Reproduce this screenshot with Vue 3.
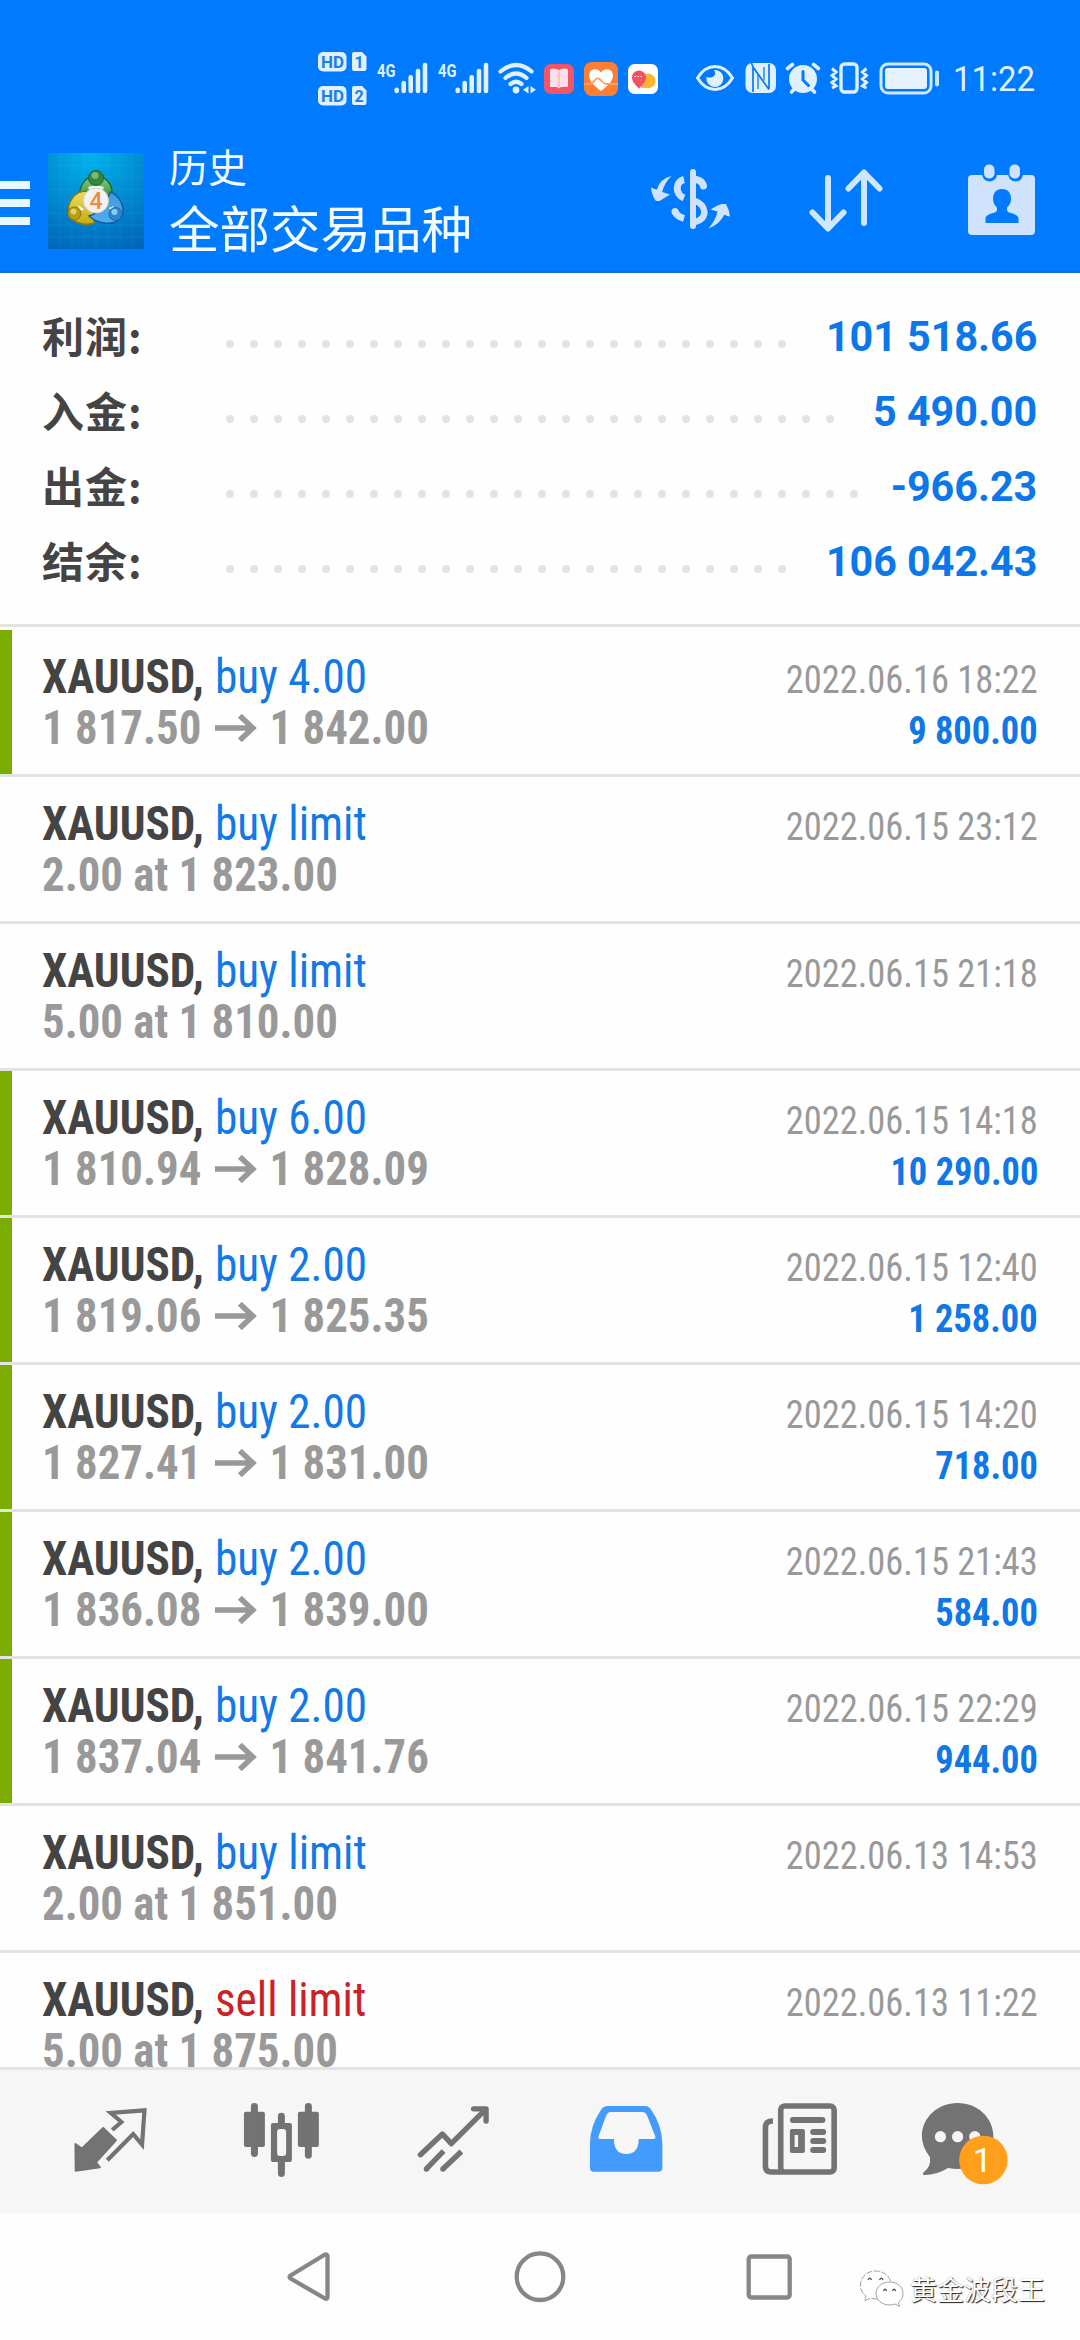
<script setup>
const summary = [
  { label: '利润:', value: '101 518.66', dots: 24 },
  { label: '入金:', value: '5 490.00', dots: 26 },
  { label: '出金:', value: '-966.23', dots: 27 },
  { label: '结余:', value: '106 042.43', dots: 24 },
]

const deals = [
  { kind: 'buy 4.00', from: '1 817.50', to: '1 842.00', time: '2022.06.16 18:22', profit: '9 800.00' },
  { kind: 'buy limit', note: '2.00 at 1 823.00', time: '2022.06.15 23:12' },
  { kind: 'buy limit', note: '5.00 at 1 810.00', time: '2022.06.15 21:18' },
  { kind: 'buy 6.00', from: '1 810.94', to: '1 828.09', time: '2022.06.15 14:18', profit: '10 290.00' },
  { kind: 'buy 2.00', from: '1 819.06', to: '1 825.35', time: '2022.06.15 12:40', profit: '1 258.00' },
  { kind: 'buy 2.00', from: '1 827.41', to: '1 831.00', time: '2022.06.15 14:20', profit: '718.00' },
  { kind: 'buy 2.00', from: '1 836.08', to: '1 839.00', time: '2022.06.15 21:43', profit: '584.00' },
  { kind: 'buy 2.00', from: '1 837.04', to: '1 841.76', time: '2022.06.15 22:29', profit: '944.00' },
  { kind: 'buy limit', note: '2.00 at 1 851.00', time: '2022.06.13 14:53' },
  { kind: 'sell limit', note: '5.00 at 1 875.00', time: '2022.06.13 11:22', sell: true },
]
</script>

<template>
  <div class="screen">
    <header class="top">
      <div class="status">
        <svg class="status-icons" viewBox="310 48 640 64" width="640" height="64">
          <g fill="#dff1ff">
            <rect x="318" y="52" width="28.5" height="19.5" rx="5" />
            <path d="M354 52h8l4.500 4.500v12.500q0 2-2 2h-10.500q-2 0-2-2v-15q0-2 2-2z" />
            <rect x="318" y="86" width="28.500" height="19.500" rx="5" />
            <path d="M354 86h8l4.500 4.500v12.500q0 2-2 2h-10.500q-2 0-2-2v-15q0-2 2-2z" />
          </g>
          <g class="badge-text" fill="#1680f0">
            <text x="321" y="67.500" font-size="17" textLength="23" lengthAdjust="spacingAndGlyphs">HD</text>
            <text x="321" y="101.500" font-size="17" textLength="23" lengthAdjust="spacingAndGlyphs">HD</text>
            <text x="354.500" y="67.500" font-size="16">1</text>
            <text x="354.500" y="101.500" font-size="16">2</text>
          </g>
          <g v-for="dx in [0, 61]" :key="dx" :transform="`translate(${dx} 0)`">
            <text class="badge-text" x="377" y="76.500" font-size="19" fill="#dff1ff" textLength="18.500" lengthAdjust="spacingAndGlyphs">4G</text>
            <path d="M396.700 89.800v1.200M403.700 83v8M410.700 77.300v13.700M418 71v20M425 65v26" stroke="#dff1ff" stroke-width="4.600" stroke-linecap="round" />
          </g>
          <g fill="none" stroke="#dff1ff" stroke-width="4.200" stroke-linecap="round">
            <path d="M500.500 71.500q15.500-13 31 0" />
            <path d="M505.500 78q10.500-9 21 0" />
            <path d="M510.500 84q5.500-4.500 11 0" />
          </g>
          <circle cx="516" cy="90" r="3.400" fill="#dff1ff" />
          <path d="M528.500 86v7.500l-5.500-3.700zM530.500 86v7.500l5.500-3.700z" fill="#dff1ff" />

          <rect x="544" y="64" width="30" height="30" rx="6.500" fill="#f15567" />
          <path d="M550 69q5-1.500 9 1q4-2.500 9-1v18h-7l-2 1.500-2-1.500h-7z" fill="#ffe0e6" />
          <path d="M559 70v18" stroke="#f6a3b0" stroke-width="1" />
          <rect x="584" y="62" width="34" height="34" rx="7.500" fill="#ff7e35" />
          <path d="M601 91c-5-4-12-9-12-15.500c0-7 8.500-8.500 12-3c3.500-5.500 12-4 12 3c0 6.500-7 11.500-12 15.500z" fill="#fff" />
          <path d="M584 84h5q3 0 6-4q2.500-3 5-.5q4 4.500 7 4.500h11" fill="none" stroke="#ff9d5c" stroke-width="1.800" />
          <rect x="628" y="64" width="30" height="30" rx="6.500" fill="#fff" />
          <path d="M641 88v-8a7.300 7.300 0 1 1 5.500 8z" fill="#ffb52e" />
          <path d="M639 88.500c-4-4-7-7-7-11a7 7 0 0 1 14 0c0 4-3 7-7 11z" fill="#f4505f" />
          <path d="M634.500 76.500h8" stroke="#fff" stroke-width="1.200" stroke-dasharray="1.500 1.500" />

          <path d="M697.500 78q7-11.500 17.500-11.500t17.500 11.500q-7 11.500-17.500 11.500t-17.500-11.500z" fill="none" stroke="#dff1ff" stroke-width="3" />
          <path d="M714 70a8.500 8.500 0 1 1-7.500 7q5 1.500 7.500-1t0-6z" fill="#dff1ff" />

          <rect x="745.500" y="63" width="30.500" height="30" rx="7" fill="#dff1ff" />
          <path d="M753 92v-25l16 22.500M769 64v25M753 67l-1.500-4" fill="none" stroke="#0879fa" stroke-width="1.700" />
          <path d="M758 89v-14M764 67v13.500" stroke="#0879fa" stroke-width="1.300" />

          <circle cx="803" cy="79" r="14" fill="#dff1ff" />
          <path d="M787.500 68.500l5-4M818.500 68.500l-5-4M791.500 92l3-3M814.500 92l-3-3" stroke="#dff1ff" stroke-width="3.600" stroke-linecap="round" />
          <path d="M803 71.500v8.500l5.500 5.500" fill="none" stroke="#0879fa" stroke-width="3" stroke-linecap="round" />

          <rect x="841" y="64" width="16" height="28" rx="3.500" fill="none" stroke="#dff1ff" stroke-width="3.400" />
          <path d="M832 68.500l4 3.500-4 3.500 4 3.500-4 3.500 4 3.500-4 2M866.500 68.500l-4 3.500 4 3.500-4 3.500 4 3.500-4 3.500 4 2" fill="none" stroke="#dff1ff" stroke-width="3" />

          <rect x="881" y="64" width="50" height="29" rx="7" fill="none" stroke="#cfe8ff" stroke-width="3" />
          <rect x="885" y="68" width="42" height="21" rx="3" fill="#e4f1ff" />
          <rect x="935" y="70.500" width="4" height="16" rx="2" fill="#cfe8ff" />
        </svg>
        <span class="clock">11:22</span>
      </div>

      <div class="bar">
        <div class="burger"><i></i><i></i><i></i></div>
        <svg class="logo" viewBox="0 0 96 96" width="96" height="96">
          <defs>
            <radialGradient id="sky" cx=".45" cy="0" r="1.100">
              <stop offset="0" stop-color="#00b4ee" />
              <stop offset=".45" stop-color="#008fd4" />
              <stop offset="1" stop-color="#0065ba" />
            </radialGradient>
            <linearGradient id="green" x1="0" y1="0" x2="0" y2="1"><stop offset="0" stop-color="#86c98a" /><stop offset="1" stop-color="#2c8a2e" /></linearGradient>
            <linearGradient id="gold" x1="0" y1="0" x2="0" y2="1"><stop offset="0" stop-color="#e8de62" /><stop offset="1" stop-color="#c9ab14" /></linearGradient>
            <linearGradient id="blue" x1="0" y1="0" x2="0" y2="1"><stop offset="0" stop-color="#3f97dc" /><stop offset="1" stop-color="#4fb0ee" /></linearGradient>
          </defs>
          <rect width="96" height="96" fill="url(#sky)" />
          <path d="M12 0v96M24 0v96M36 0v96M48 0v96M60 0v96M72 0v96M84 0v96M0 12h96M0 24h96M0 36h96M0 48h96M0 60h96M0 72h96M0 84h96" stroke="#fff" stroke-opacity=".05" />
          <path d="M33 49c-4-12 2-26 15-26s19 13 15 26z" fill="url(#green)" stroke="#1c6d2b" stroke-width="1.500" />
          <path d="M46 70c-9 3-20 0-25-7c-3-14 6-25 17-25c5 8 10 20 8 32z" fill="url(#gold)" stroke="#8a7c10" stroke-width="1.500" />
          <path d="M41 63c8-2 17-10 21-24c10 3 14 14 13 23c-5 8-13 9-19 8c-7-1-12-4-15-7z" fill="url(#blue)" stroke="#145b9e" stroke-width="1.500" />
          <path d="M40 34l8-2 8 2-3 6h-10zM30 52l6 4-4 3zM61 55l5-2-1 6z" fill="#eef6ea" />
          <circle cx="48" cy="25" r="7.500" fill="#36863b" stroke="#22662a" />
          <circle cx="47" cy="22.500" r="3.500" fill="#79b77a" />
          <circle cx="26.500" cy="60.500" r="6.500" fill="#b99c11" stroke="#8e760a" />
          <circle cx="25.500" cy="58.500" r="3" fill="#ded36b" />
          <circle cx="67.500" cy="61" r="6.500" fill="#2b88cf" stroke="#1765a8" />
          <circle cx="66.500" cy="59" r="3" fill="#8accf3" />
          <circle cx="48" cy="47.500" r="12.500" fill="#f4f2f0" stroke="#d5d3d0" />
          <text x="48" y="56" text-anchor="middle" font-size="23" font-weight="500" font-family="Roboto, sans-serif" fill="#f08a3c">4</text>
        </svg>
        <div class="titles">
          <div class="title">历史</div>
          <div class="subtitle">全部交易品种</div>
        </div>
        <svg class="actions" viewBox="640 160 410 80" width="410" height="80">
          <g fill="#cfe3ff">
            <path d="M671.500 176q-6.500 6-9.500 16l8 2.500q-6 3.500-9.500 6q-3 1-5 0q-4-6-4.500-13q4 2 6 2q3-11 14.500-13.500z" />
            <path d="M708.500 228.500q7-8 9-17l-7-2q6-4 11-5.500h4.500q3.500 6 4 12.500q-3 0-5.500-2q-5 10-16 14z" />
            <rect x="690" y="169" width="6" height="60" rx="3" />
          </g>
          <g fill="none" stroke="#cfe3ff" stroke-width="7">
            <path d="M684 179.500c-9 2-9 15 0 18.500" />
            <path d="M684 218.500q-7-2-9-7" />
            <path d="M675 211.500v.1" stroke-linecap="round" />
            <path d="M696 179.500q6.500 1.500 7.500 6.500" stroke-linecap="round" />
            <path d="M695 201c12 4 13 18 0 21" stroke-width="6.500" />
          </g>
          <g fill="none" stroke="#cfe6ff" stroke-width="6" stroke-linecap="round" stroke-linejoin="round">
            <path d="M828 178v50M812.500 212.500L828 228.500L843.500 212.500" />
            <path d="M864 223v-50M848.500 188.500L864 172.500L879.500 188.500" />
          </g>
          <path d="M973 175h59q4 0 4 4v52q0 4-4 4h-59q-4 0-4-4v-52q0-4 4-4z" fill="#cfe3ff" transform="translate(-1)" />
          <path d="M982 171h15q1 10-7.500 10.500q-8-.5-7.500-10.500zM1008 171h15q1 10-7.500 10.500q-8-.5-7.500-10.500z" fill="#007aff" />
          <rect x="984" y="164.500" width="10.500" height="14" rx="5" fill="#cfe3ff" />
          <rect x="1009.500" y="164.500" width="10.500" height="14" rx="5" fill="#cfe3ff" />
          <path d="M1002 189c6 0 9 4 9 10c0 4-2 7-4 8.500v3q1 2 4 2.500q7 2 7.500 5v5h-33v-5q.5-3 7.500-5q3-.5 4-2.500v-3c-2-1.500-4-4.500-4-8.500c0-6 3-10 9-10z" fill="#007aff" />
        </svg>
      </div>
    </header>

    <section class="summary">
      <div v-for="row in summary" :key="row.label" class="sum-row">
        <span class="sum-label">{{ row.label }}</span>
        <span class="dots"><i v-for="n in row.dots" :key="n"></i></span>
        <span class="sum-value">{{ row.value }}</span>
      </div>
    </section>

    <main class="list">
      <article v-for="deal in deals" :key="deal.time" class="deal" :class="{ done: deal.profit }">
        <div class="line">
          <span class="name"><b>XAUUSD,</b> <span :class="deal.sell ? 'sell' : 'buy'">{{ deal.kind }}</span></span>
          <time class="time">{{ deal.time }}</time>
        </div>
        <div class="line">
          <span class="price">
            <template v-if="deal.from">{{ deal.from }}<svg class="arrow" viewBox="0 0 42 28" width="45" height="28" preserveAspectRatio="none"><path d="M0 14h37M25 1.800L38 14L25 26.200" fill="none" stroke="#999" stroke-width="5.600" /></svg>{{ deal.to }}</template>
            <template v-else>{{ deal.note }}</template>
          </span>
          <span v-if="deal.profit" class="profit">{{ deal.profit }}</span>
        </div>
      </article>
    </main>

    <nav class="tabs">
      <svg class="tab" viewBox="22 2070 173 144">
        <path d="M75.500 2144l6.500 4.500 21.300-20.500 12.700 12.300-20 22 4 5-24.200 3.400z" fill="#737373" stroke="#737373" stroke-width="2" stroke-linejoin="round" />
        <path d="M112.300 2130l9.200-8-10.600-9 33.700-2.700-2.400 34.400-8.900-10.700-25.900 26.300" fill="none" stroke="#737373" stroke-width="4.200" />
      </svg>
      <svg class="tab" viewBox="195 2070 173 144">
        <g fill="#737373">
          <rect x="244" y="2111.700" width="21" height="35.300" rx="2" />
          <rect x="251" y="2103" width="7" height="54" rx="3.500" />
          <rect x="298" y="2111.700" width="21" height="35.300" rx="2" />
          <rect x="305" y="2103" width="7" height="55.700" rx="3.500" />
          <rect x="278" y="2112.700" width="7" height="64.300" rx="3.500" />
          <rect x="271" y="2123" width="21" height="39" rx="2" />
        </g>
        <rect x="277.200" y="2129" width="9" height="27" rx="3" fill="#f6f6f6" />
      </svg>
      <svg class="tab" viewBox="368 2070 173 144">
        <g fill="none" stroke="#737373" stroke-width="5.400" stroke-linejoin="round">
          <path d="M420.500 2154.700L442.500 2134L451.400 2143.700L485 2110" stroke-linecap="round" />
          <path d="M473.700 2108.800H486.200V2121" stroke-linecap="round" />
          <path d="M426.500 2169L443.700 2151M443 2169L461.500 2151.500" />
        </g>
        <circle cx="426.500" cy="2169" r="2.700" fill="#737373" /><circle cx="443" cy="2169" r="2.700" fill="#737373" />
      </svg>
      <svg class="tab" viewBox="540 2070 173 144">
        <path d="M608 2106h37q4 0 6.500 4q11 16 11 34v24q0 3.700-4 3.700h-64.500q-4 0-4-3.700v-24q0-18 11-34q2.500-4 7-4z" fill="#439bfe" />
        <path d="M611 2112h31.500q3 0 4.500 3l8.500 21.500q.5 2.500-2 2.500h-14.700q0 15-12.400 15t-12.400-15h-13.500q-2.500 0-2-2.500l8-21.500q1.500-3 4.500-3z" fill="#f6f6f6" />
      </svg>
      <svg class="tab" viewBox="713 2070 173 144">
        <g fill="none" stroke="#737373" stroke-width="5.600">
          <rect x="780.800" y="2106" width="53.500" height="66" rx="4" />
          <path d="M773 2121q-7.500 0-7.500 6v39q0 6 6 6h12" />
        </g>
        <g fill="#737373">
          <rect x="790" y="2117" width="35.500" height="6" rx="3" />
          <path d="M792 2129h11q2 0 2 2v20q0 2-2 2h-11q-2 0-2-2v-20q0-2 2-2zM794.700 2135v12h3.500v-12z" fill-rule="evenodd" />
          <rect x="810.300" y="2129" width="16" height="6" rx="3" />
          <rect x="810.300" y="2138" width="16" height="6" rx="3" />
          <rect x="810.300" y="2147" width="16" height="6" rx="3" />
        </g>
      </svg>
      <svg class="tab" viewBox="886 2070 173 144">
        <path d="M957.700 2103c20 0 35.800 15 35.800 33c0 20-16 33-35.800 33q-4 0-9.700-1q-11 7-23.500 7q-2.500-.5-1-2.500q8-6 6.500-15.500q-8-10-8.100-21c0-18 15.800-33 35.800-33z" fill="#737373" />
        <g fill="#f6f6f6"><circle cx="940.500" cy="2136.700" r="5.600" /><circle cx="957.700" cy="2136.700" r="5.600" /><circle cx="974.900" cy="2136.700" r="5.600" /></g>
        <circle cx="983.500" cy="2160" r="24.300" fill="#ff9f1c" />
        <text x="982.500" y="2171.700" text-anchor="middle" font-size="34" font-family="Roboto, sans-serif" fill="#fff">1</text>
      </svg>
    </nav>

    <footer class="sysnav">
      <svg class="sys" viewBox="280 2214 520 126" width="520" height="126">
        <g fill="none" stroke="#868686" stroke-width="4.300" stroke-linejoin="round">
          <path d="M290.500 2275.500L325 2254.500Q327.500 2254 327.500 2256.500V2296.500Q327.500 2299.500 325 2298.500L290.500 2278.500Q288.500 2277 290.500 2275.500Z" />
          <circle cx="540" cy="2276.700" r="23.300" />
          <rect x="748.700" y="2256.500" width="41" height="41" rx="2.500" />
        </g>
      </svg>
      <div class="mark">
        <svg viewBox="858 2270 46 40" width="46" height="40">
          <g fill="#fff" stroke="#a2a2a2" stroke-width="1">
            <path d="M890.500 2282c-2-6-8-10-14.500-10c-9 0-15.500 6-15.500 14c0 5 2 8.500 5.500 11l-1.500 5 6-3q3 1 6.500 1" stroke-dasharray="6 1.500" />
            <path d="M889.500 2283c8 0 13.500 5 13.500 11.500c0 4-1.500 6.500-4.500 9l1 4-4.500-2.500q-3 1-5.500 1c-7.500 0-13.500-5-13.500-11.500s6-11.500 13.500-11.500z" />
          </g>
          <path d="M868 2281q1.800-3.500 3.600 0M879.500 2281q1.800-3.500 3.600 0M883.500 2292q1.600-3.500 3.200 0M892.500 2292q1.600-3.500 3.200 0" fill="none" stroke="#555" stroke-width="1.300" />
        </svg>
        <span>黄金波段王</span>
      </div>
    </footer>
  </div>
</template>

<style>
body {
  margin: 0;
}
</style>

<style scoped>
.screen {
  width: 1080px;
  height: 2340px;
  display: flex;
  flex-direction: column;
  overflow: hidden;
  background: #fefefe;
  font-family: Roboto, "Noto Sans CJK SC", sans-serif;
}
.screen svg {
  display: block;
  flex: none;
}
.top {
  height: 271px;
  flex: none;
  background: #007aff;
  border-bottom: 2px solid #0e6fd6;
  display: flex;
  flex-direction: column;
}
.status {
  height: 112px;
  flex: none;
  display: flex;
  padding-left: 310px;
}
.status-icons {
  margin-top: 48px;
}
.clock {
  margin: 59px 0 0 3px;
  font-size: 35px;
  line-height: 41px;
  color: #dff1ff;
  transform: scaleX(.94);
  transform-origin: left;
}
.badge-text {
  font-family: Roboto, sans-serif;
  font-weight: 700;
}
.bar {
  height: 159px;
  flex: none;
  display: flex;
  align-items: flex-start;
}
.burger {
  width: 30px;
  margin-top: 69px;
  display: flex;
  flex-direction: column;
  gap: 10px;
}
.burger i {
  height: 8px;
  background: #e8f8ff;
}
.logo {
  margin: 41px 0 0 18px;
}
.titles {
  margin-left: 25px;
  width: 471px;
  padding-top: 24px;
  color: #f2fbff;
  font-family: "Noto Sans CJK SC", sans-serif;
}
.title {
  font-size: 39px;
  line-height: 58px;
}
.subtitle {
  font-size: 50.500px;
  line-height: 64px;
}
.actions {
  margin-top: 48px;
}
.summary {
  height: 354px;
  flex: none;
  box-sizing: border-box;
  padding: 26px 43px 0 42px;
  border-bottom: 3px solid #e3e3e3;
}
.sum-row {
  height: 75px;
  display: flex;
  align-items: center;
  color: #444;
}
.sum-label {
  width: 184px;
  padding-bottom: 4px;
  font-size: 42px;
  line-height: 60px;
  font-weight: 700;
  letter-spacing: 1px;
  font-family: "Noto Sans CJK SC", sans-serif;
}
.dots {
  flex: 1;
  display: flex;
  gap: 16px;
  padding-top: 15px;
}
.dots i {
  width: 8px;
  height: 8px;
  border-radius: 50%;
  background: #e3e3e3;
}
.sum-value {
  font-size: 42px;
  line-height: 60px;
  font-weight: 700;
  color: #0c77ea;
  transform: scaleX(.982);
  transform-origin: right;
}
.list {
  height: 1440px;
  flex: none;
  box-sizing: border-box;
  padding-top: 3px;
  overflow: hidden;
  font-family: "Roboto Condensed", Roboto, sans-serif;
  font-stretch: 75%;
}
.deal {
  height: 144px;
  box-sizing: border-box;
  padding: 21px 42px 0 30px;
  border-left: 12px solid transparent;
  margin-bottom: 3px;
  box-shadow: 0 3px #e3e3e3;
}
.deal.done {
  border-left-color: #7bac00;
}
.line {
  height: 51px;
  display: flex;
  justify-content: space-between;
  align-items: baseline;
  white-space: nowrap;
}
.name {
  font-size: 48px;
  line-height: 51px;
  color: #444;
  transform: scaleX(.941);
  transform-origin: left;
}
.buy,
.sell {
  margin-left: 1px;
}
.buy {
  color: #1279e6;
}
.sell {
  color: #cc2127;
}
.price {
  font-size: 48px;
  line-height: 51px;
  font-weight: 700;
  color: #999;
  transform: scaleX(.934);
  transform-origin: left;
}
.screen .arrow {
  display: inline-block;
  margin: 0 14px;
  vertical-align: 2px;
}
.time,
.profit {
  font-size: 39px;
  transform: scaleX(.934);
  transform-origin: right;
}
.time {
  color: #999;
}
.profit {
  font-weight: 700;
  color: #0f77e6;
}
.tabs {
  height: 147px;
  flex: none;
  box-sizing: border-box;
  border-top: 3px solid #e1e4e3;
  background: #f6f6f6;
  display: flex;
  padding-left: 22px;
}
.tab {
  width: 172.800px;
  height: 144px;
}
.sysnav {
  flex: 1;
  background: #fdfdfd;
  display: flex;
  padding-left: 280px;
}
.mark {
  display: flex;
  align-items: center;
  margin: 24px 0 0 58px;
}
.mark span {
  margin-left: 6px;
  font: 27px/40px "Noto Sans CJK SC", sans-serif;
  color: #fff;
  text-shadow: 1px 1px 1px #222, 0 0 1px #888;
}
</style>
